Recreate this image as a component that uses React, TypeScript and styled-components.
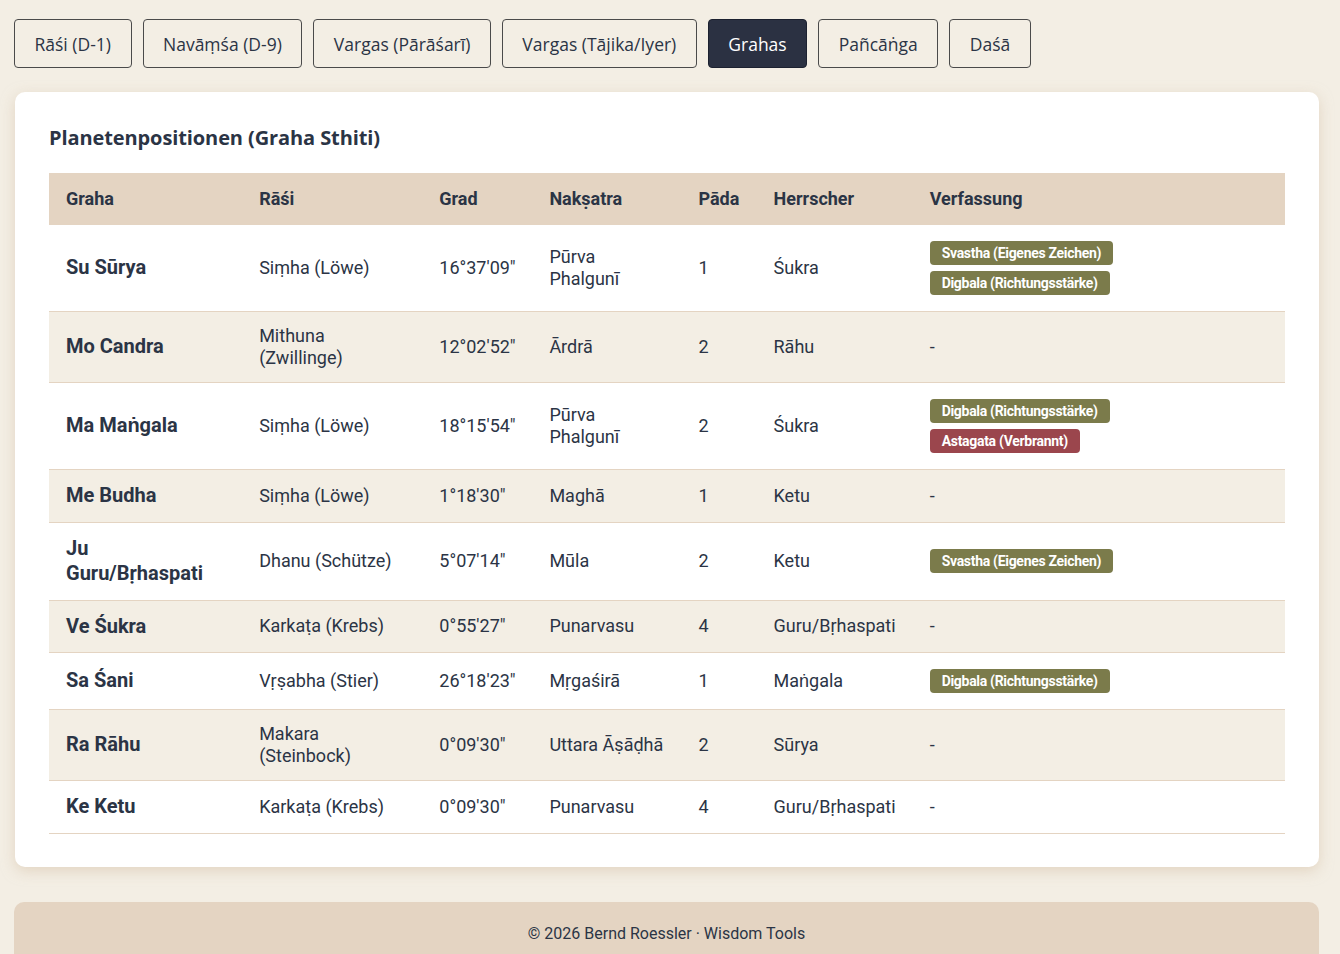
import React, { FC } from 'react'
import styled, { createGlobalStyle } from 'styled-components';

type Tone = 'good' | 'bad';

interface Badge {
  label: string;
  tone: Tone;
}

interface GrahaRow {
  graha: string;
  rasi: string;
  grad: string;
  naksatra: string;
  pada: string;
  herrscher: string;
  verfassung: Badge[];
}

const TABS = ['Rāśi (D-1)', 'Navāṃśa (D-9)', 'Vargas (Pārāśarī)', 'Vargas (Tājika/Iyer)', 'Grahas', 'Pañcāṅga', 'Daśā'];

const SVASTHA: Badge = { label: 'Svastha (Eigenes Zeichen)', tone: 'good' };
const DIGBALA: Badge = { label: 'Digbala (Richtungsstärke)', tone: 'good' };
const ASTAGATA: Badge = { label: 'Astagata (Verbrannt)', tone: 'bad' };

const ROWS: GrahaRow[] = [
  { graha: 'Su Sūrya', rasi: 'Siṃha (Löwe)', grad: '16°37\'09"', naksatra: 'Pūrva Phalgunī', pada: '1', herrscher: 'Śukra', verfassung: [SVASTHA, DIGBALA] },
  { graha: 'Mo Candra', rasi: 'Mithuna (Zwillinge)', grad: '12°02\'52"', naksatra: 'Ārdrā', pada: '2', herrscher: 'Rāhu', verfassung: [] },
  { graha: 'Ma Maṅgala', rasi: 'Siṃha (Löwe)', grad: '18°15\'54"', naksatra: 'Pūrva Phalgunī', pada: '2', herrscher: 'Śukra', verfassung: [DIGBALA, ASTAGATA] },
  { graha: 'Me Budha', rasi: 'Siṃha (Löwe)', grad: '1°18\'30"', naksatra: 'Maghā', pada: '1', herrscher: 'Ketu', verfassung: [] },
  { graha: 'Ju Guru/Bṛhaspati', rasi: 'Dhanu (Schütze)', grad: '5°07\'14"', naksatra: 'Mūla', pada: '2', herrscher: 'Ketu', verfassung: [SVASTHA] },
  { graha: 'Ve Śukra', rasi: 'Karkaṭa (Krebs)', grad: '0°55\'27"', naksatra: 'Punarvasu', pada: '4', herrscher: 'Guru/Bṛhaspati', verfassung: [] },
  { graha: 'Sa Śani', rasi: 'Vṛṣabha (Stier)', grad: '26°18\'23"', naksatra: 'Mṛgaśirā', pada: '1', herrscher: 'Maṅgala', verfassung: [DIGBALA] },
  { graha: 'Ra Rāhu', rasi: 'Makara (Steinbock)', grad: '0°09\'30"', naksatra: 'Uttara Āṣāḍhā', pada: '2', herrscher: 'Sūrya', verfassung: [] },
  { graha: 'Ke Ketu', rasi: 'Karkaṭa (Krebs)', grad: '0°09\'30"', naksatra: 'Punarvasu', pada: '4', herrscher: 'Guru/Bṛhaspati', verfassung: [] },
];

const COLS = [
  { title: 'Graha', width: 193 },
  { title: 'Rāśi', width: 180 },
  { title: 'Grad', width: 110 },
  { title: 'Nakṣatra', width: 149 },
  { title: 'Pāda', width: 75 },
  { title: 'Herrscher', width: 156 },
  { title: 'Verfassung', width: 372 },
];

const App: FC = () => {
  return (
    <>
      <GlobalStyle />
      <StyledPage>
        <StyledTabs>
          {TABS.map(tab => (
            <StyledTab key={tab} $active={tab === 'Grahas'}>{tab}</StyledTab>
          ))}
        </StyledTabs>

        <StyledCard>
          <StyledTitle>Planetenpositionen (Graha Sthiti)</StyledTitle>
          <StyledTable>
            <colgroup>
              {COLS.map(col => <col key={col.title} style={{ width: col.width }} />)}
            </colgroup>
            <thead>
              <tr>
                {COLS.map(col => <StyledTh key={col.title}>{col.title}</StyledTh>)}
              </tr>
            </thead>
            <tbody>
              {ROWS.map(row => (
                <StyledRow key={row.graha}>
                  <StyledGrahaCell>{row.graha}</StyledGrahaCell>
                  <StyledTd>{row.rasi}</StyledTd>
                  <StyledTd>{row.grad}</StyledTd>
                  <StyledTd>{row.naksatra}</StyledTd>
                  <StyledTd>{row.pada}</StyledTd>
                  <StyledTd>{row.herrscher}</StyledTd>
                  <StyledTd>
                    {row.verfassung.length === 0 ? '-' : (
                      <StyledBadgeStack>
                        {row.verfassung.map(b => <StyledBadge key={b.label} $tone={b.tone}>{b.label}</StyledBadge>)}
                      </StyledBadgeStack>
                    )}
                  </StyledTd>
                </StyledRow>
              ))}
            </tbody>
          </StyledTable>
        </StyledCard>

        <StyledFooter>© 2026 Bernd Roessler · Wisdom Tools</StyledFooter>
      </StyledPage>
    </>
  )
}

const GlobalStyle = createGlobalStyle`
    html, body {
        margin: 0;
        padding: 0;
        background: #f3eee4;
        color: #2b3445;
        font-family: Roboto, "Liberation Sans", sans-serif;
    }
`;

const StyledPage = styled.div`
    display: flex;
    flex-direction: column;
    padding: 19px 21px 0 14px;
`;

const StyledTabs = styled.nav`
    display: flex;
    gap: 11px;
`;

const StyledTab = styled.button<{ $active?: boolean }>`
    height: 49px;
    padding: 0 19.5px;
    border: 1px solid ${p => p.$active ? '#1c2130' : '#4a4a4a'};
    border-radius: 4px;
    background: ${p => p.$active ? '#2b3142' : 'transparent'};
    color: ${p => p.$active ? '#ffffff' : '#2b3445'};
    font-family: "Open Sans", Lato, sans-serif;
    font-size: 17.5px;
    cursor: pointer;
`;

const StyledCard = styled.section`
    margin: 24px 0 0 1px;
    padding: 34px 34px 33px;
    background: #ffffff;
    border-radius: 10px;
    box-shadow: 0 4px 14px rgba(214, 192, 165, 0.55);
`;

const StyledTitle = styled.h2`
    margin: 0 0 23px;
    font-family: "Open Sans", Lato, sans-serif;
    font-size: 20px;
    font-weight: 700;
    line-height: 24px;
    letter-spacing: -0.1px;
    color: #2b3445;
`;

const StyledTable = styled.table`
    width: 100%;
    border-collapse: collapse;
    table-layout: fixed;
`;

const StyledTh = styled.th`
    background: #e4d4c2;
    text-align: left;
    padding: 15px 17px;
    font-size: 18px;
    font-weight: 700;
    line-height: 22px;
`;

const StyledRow = styled.tr`
    border-bottom: 1px solid #e4d4c2;
    &:nth-child(even) {
        background: #f3eee4;
    }
`;

const StyledTd = styled.td`
    padding: 13px 17px;
    font-size: 18px;
    line-height: 22px;
    vertical-align: middle;
`;

const StyledGrahaCell = styled(StyledTd)`
    font-size: 20px;
    font-weight: 700;
    line-height: 25.5px;
`;

const StyledBadgeStack = styled.div`
    display: flex;
    flex-direction: column;
    align-items: flex-start;
    gap: 6px;
    padding: 3px 0;
`;

const StyledBadge = styled.span<{ $tone: Tone }>`
    display: inline-block;
    height: 24px;
    padding: 0 12px;
    border-radius: 4px;
    background: ${p => p.$tone === 'bad' ? '#9b464d' : '#7b7b4b'};
    color: #ffffff;
    font-size: 14px;
    font-weight: 700;
    line-height: 24px;
    letter-spacing: -0.3px;
`;

const StyledFooter = styled.footer`
    margin: 35px 0 0 0;
    padding: 22px 0 30px;
    background: #e4d4c2;
    border-radius: 10px 10px 0 0;
    text-align: center;
    font-size: 16px;
`;

export default React.memo(App)
